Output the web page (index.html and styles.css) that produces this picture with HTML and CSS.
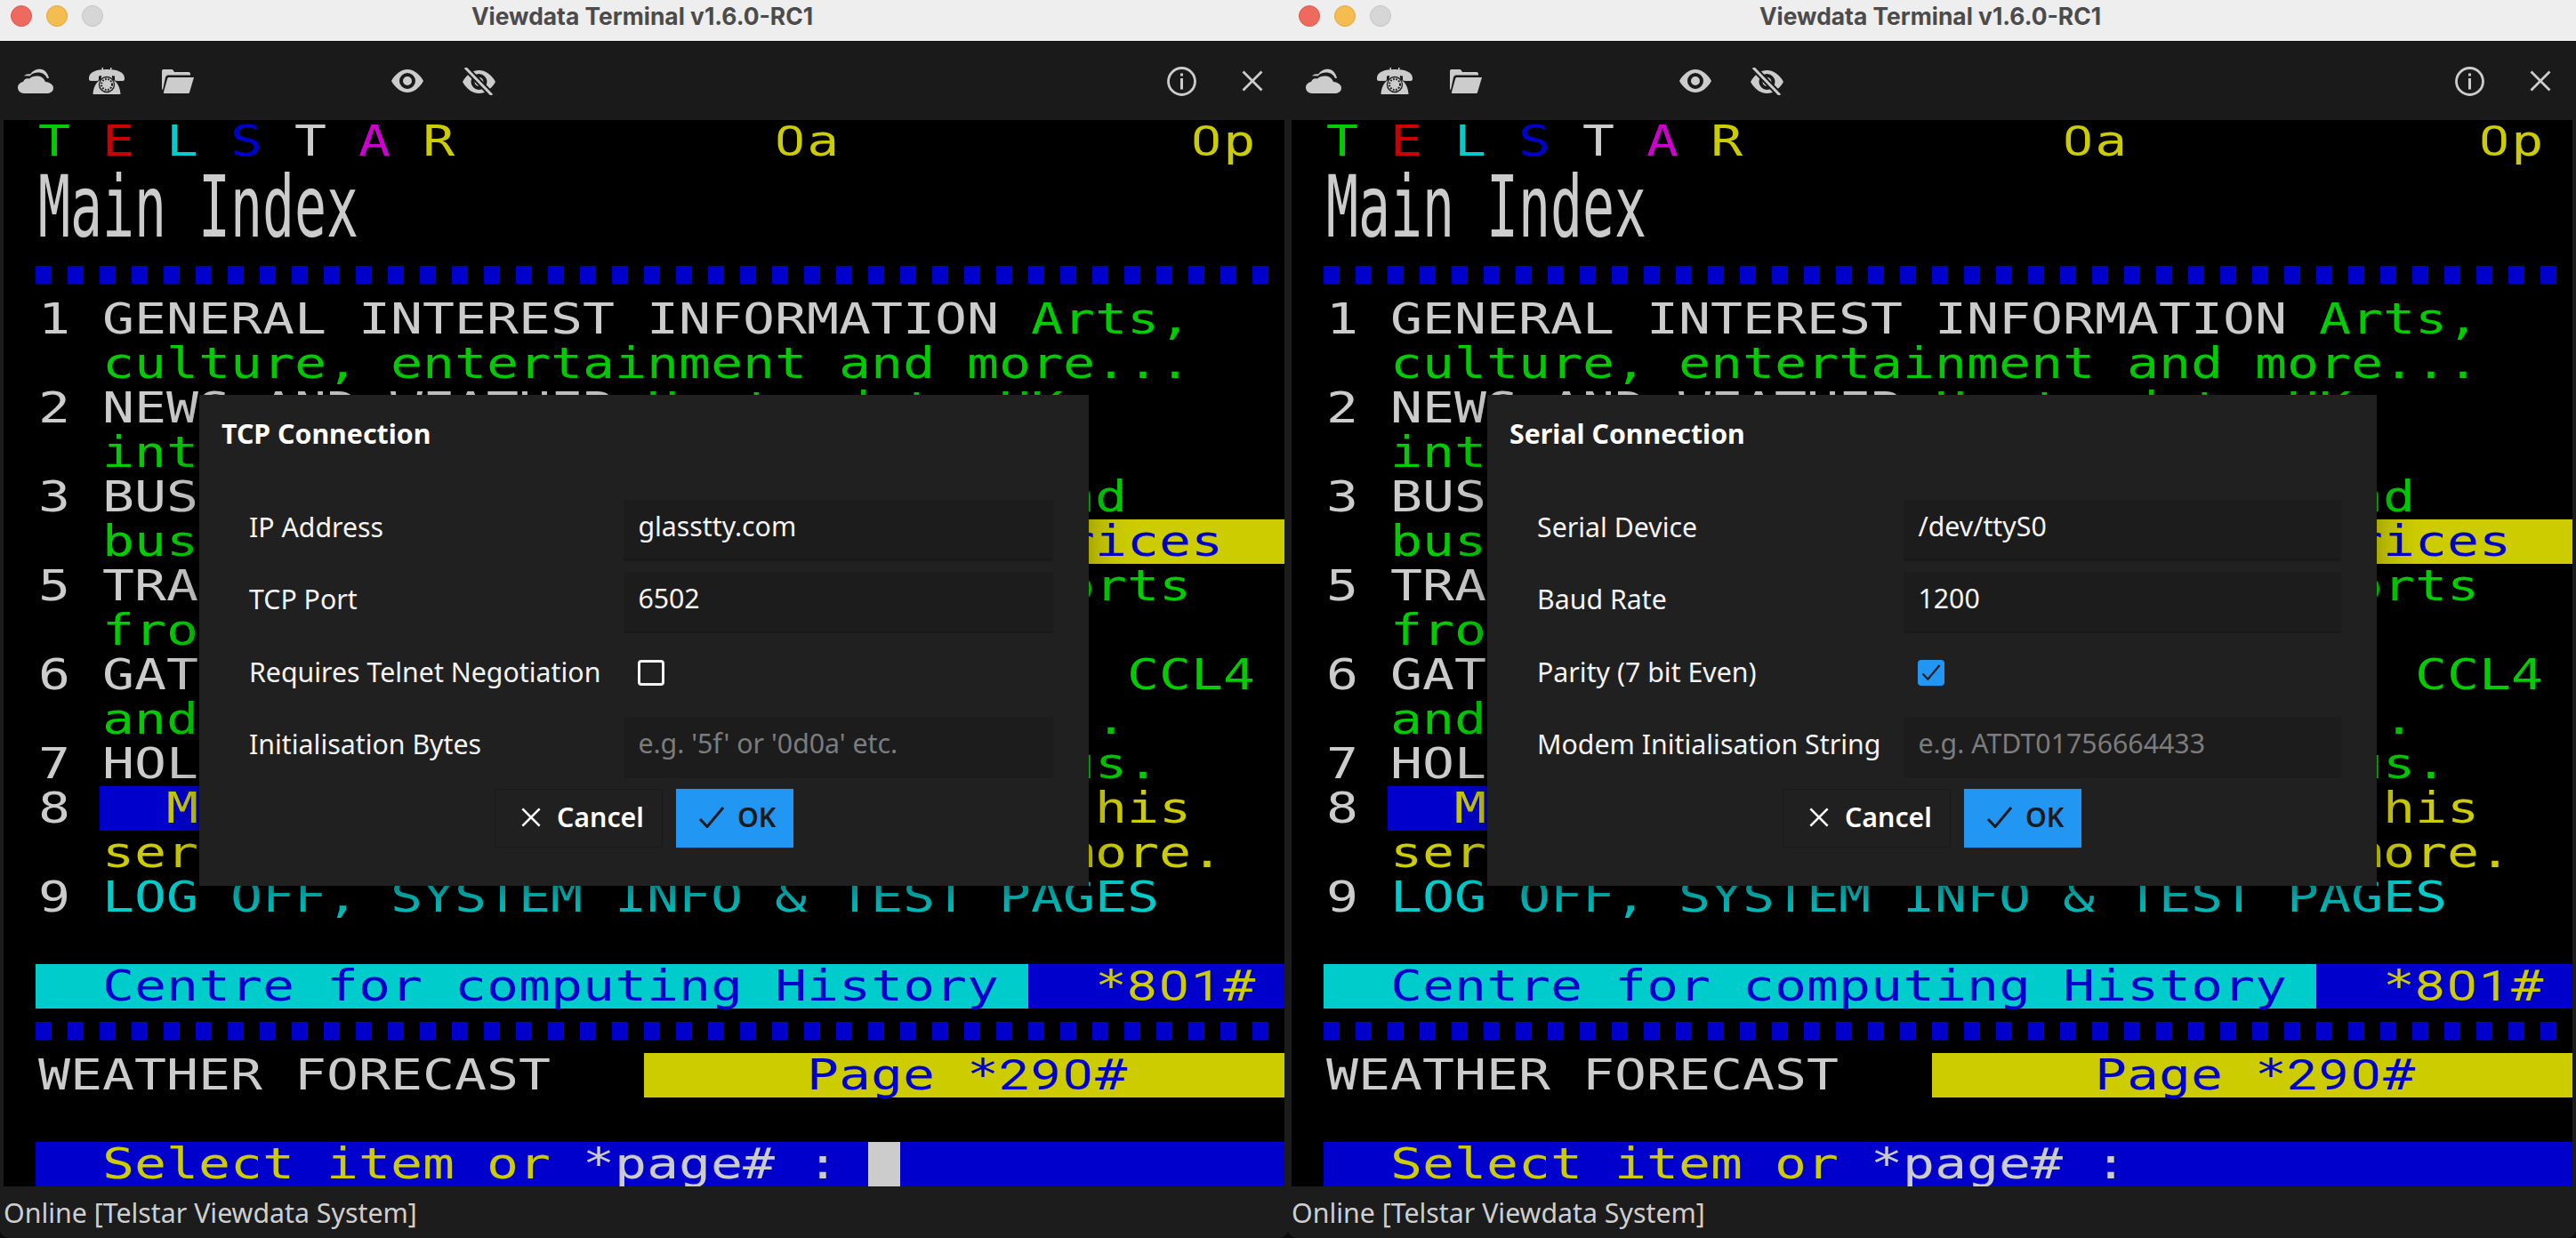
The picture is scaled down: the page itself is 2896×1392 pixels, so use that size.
FILE: index.html
```html
<!DOCTYPE html>
<html>
  <head>
    <title>Viewdata Terminal</title>
    <meta name="viewport" content="width=device-width, initial-scale=1.0" />
    <link rel="stylesheet" href="styles.css">
  </head>
  <body>
    <svg class="defs" width="0" height="0">
      <symbol id="i-cloud" viewBox="0 0 40 28">
        <path d="M7 28C3 28 0 25 0 21.5 0 18 3 15.5 6 15 7 11.5 10 10.5 13 11.5 15 9 19 8 23 8.5 27 9 30 12 31 15 36 15.5 40 18 40 22 40 25.5 37 28 33 28Z" />
        <path d="M7 8.5C9 6.5 11 6 14 6.5 17 1.5 23 0 27 1 31 2 34 6 35 11L33 11C31 6.5 27 4.5 23 4.5 19 4.5 15.5 6 13.5 8.5 11 8 9 8 7 8.5Z" />
      </symbol>
      <symbol id="i-phone" viewBox="0 0 40 30">
        <path d="M14.5 0h1.5v3h-1.500zM24 0h1.500v3h-1.500z" />
        <path d="M0 12C0 5 8 2 20 2 32 2 40 5 40 12V13C40 14 39 15 38 15H31C30 15 29 14 29 13V9.500C24 8.500 16 8.500 11 9.500V13C11 14 10 15 9 15H2C1 15 0 14 0 13Z" />
        <path d="M14.500 8h11l1 5.500C32 16 35 22 35.500 30H4.500C5 22 8 16 13.500 13.500Z" />
        <circle cx="20" cy="19" r="8.500" fill="none" stroke="#1a1a1a" stroke-width="1.300" />
        <circle cx="20" cy="19" r="6" fill="none" stroke="#1a1a1a" stroke-width="2" stroke-dasharray="1.700 1.500" />
      </symbol>
      <symbol id="i-folder" viewBox="0 0 36 28">
        <path d="M0 3C0 1.500 1 1 2 1H11C12 1 13 2 14 4H30C31.500 4 32 5 32 6.500V7.500H7C5.500 7.500 4.500 8.500 4 10L1 24C.5 24 0 23 0 22Z" />
        <path d="M8 10H36L31 27C30.500 28 30 28 29 28H3C2 28 1.800 27.500 2 26.500L6 12C6.500 10.500 7 10 8 10Z" />
      </symbol>
      <symbol id="i-eye" viewBox="0 0 36 26">
        <path d="M0 13C5 4 12 0 18 0 24 0 31 4 36 13 31 22 24 26 18 26 12 26 5 22 0 13Z" />
        <circle cx="18" cy="13" r="7" fill="none" stroke="#1a1a1a" stroke-width="4" />
      </symbol>
      <symbol id="i-eye-off" viewBox="0 0 37 31">
        <path d="M0 16C5 7 12 3 18.500 3 25 3 32 7 37 16 32 25 25 29 18.500 29 12 29 5 25 0 16Z" />
        <circle cx="18.500" cy="16" r="7" fill="none" stroke="#1a1a1a" stroke-width="4" />
        <path d="M3 0L33 31" stroke="#1a1a1a" stroke-width="7" />
        <path d="M3 0L33 31" stroke="#cccccc" stroke-width="3" />
      </symbol>
      <symbol id="i-info" viewBox="0 0 33 33">
        <circle cx="16.500" cy="16.500" r="15" fill="none" stroke="#cccccc" stroke-width="2.800" />
        <path d="M15 7.500h3v3h-3zM15 13h3v12.500h-3z" />
      </symbol>
      <symbol id="i-close" viewBox="0 0 24 24">
        <path d="M1.500 1.500L22.500 22.500M22.500 1.500L1.500 22.500" fill="none" stroke="currentColor" stroke-width="2.800" />
      </symbol>
      <symbol id="i-check" viewBox="0 0 30 24">
        <path d="M2 14L10 22.500 28 1" fill="none" stroke="currentColor" stroke-width="3" />
      </symbol>
    </svg>

    <div class="desktop">
      <!-- TCP window -->
      <div class="window">
        <div class="titlebar">
          <span class="light red"></span>
          <span class="light amber"></span>
          <span class="light off"></span>
          <span class="title">Viewdata Terminal v1.6.0-RC1</span>
        </div>
        <div class="main">
          <div class="toolbar">
            <span class="tool"><svg class="ic-cloud"><use href="#i-cloud" /></svg></span>
            <span class="tool"><svg class="ic-phone"><use href="#i-phone" /></svg></span>
            <span class="tool"><svg class="ic-folder"><use href="#i-folder" /></svg></span>
            <span class="tool eye-group"><svg class="ic-eye"><use href="#i-eye" /></svg></span>
            <span class="tool"><svg class="ic-eye-off"><use href="#i-eye-off" /></svg></span>
            <span class="tool right-group"><svg class="ic-info"><use href="#i-info" /></svg></span>
            <span class="tool"><svg class="ic-close"><use href="#i-close" /></svg></span>
          </div>
          <div class="terminal">
            <div class="row"> <span class="gr">T</span> <span class="rd">E</span> <span class="cy">L</span> <span class="bl">S</span> <span class="wh">T</span> <span class="mg">A</span> <span class="yl">R</span>          <span class="yl"><span class="dg">0</span>a</span>           <span class="yl"><span class="dg">0</span>p</span></div>
            <div class="row double"> <span class="wh">Main Index</span></div>
            <div class="sep"></div>
            <div class="row"> <span class="wh">1 GENERAL INTEREST INFORMATION</span> <span class="gr">Arts,</span></div>
            <div class="row">   <span class="gr">culture, entertainment and more...</span></div>
            <div class="row"> <span class="wh">2 NEWS AND WEATHER</span> <span class="gr">Up to date UK</span></div>
            <div class="row">   <span class="gr">int</span></div>
            <div class="row"> <span class="wh">3 BUS</span>                           <span class="gr">nd</span></div>
            <div class="row bg-services">   <span class="gr">bus</span>                           <span class="bl">rices</span></div>
            <div class="row"> <span class="wh">5 TRA</span>                           <span class="gr">orts</span></div>
            <div class="row">   <span class="gr">fro</span></div>
            <div class="row"> <span class="wh">6 GAT</span>                             <span class="gr">CCL4</span></div>
            <div class="row">   <span class="gr">and</span>                            <span class="gr">.</span></div>
            <div class="row"> <span class="wh">7 HOL</span>                           <span class="gr">us.</span></div>
            <div class="row bg-mid"> <span class="wh">8</span>   <span class="yl">M</span>                            <span class="yl">his</span></div>
            <div class="row">   <span class="yl">ser</span>                           <span class="yl">more.</span></div>
            <div class="row"> <span class="wh">9</span> <span class="cy">LOG OFF, SYSTEM INFO &amp; TEST PAGES</span></div>
            <div class="row"></div>
            <div class="row bg-centre">   <span class="bl">Centre for computing History</span>   <span class="yl">*<span class="dg">801</span>#</span></div>
            <div class="sep"></div>
            <div class="row bg-page"> <span class="wh">WEATHER FORECAST</span>        <span class="bl">Page *<span class="dg">290</span>#</span></div>
            <div class="row"></div>
            <div class="row bg-prompt cursor">   <span class="yl">Select item or </span><span class="wh">*page# :</span></div>
          </div>
          <div class="status">Online [Telstar Viewdata System]</div>

          <div class="overlay">
            <div class="dialog">
              <div class="dialog-title">TCP Connection</div>
              <div class="form">
                <div class="label">IP Address</div>
                <div class="field">glasstty.com</div>
                <div class="label">TCP Port</div>
                <div class="field">6502</div>
                <div class="label">Requires Telnet Negotiation</div>
                <div class="check-cell"><span class="check"></span></div>
                <div class="label">Initialisation Bytes</div>
                <div class="field hint">e.g. '5f' or '0d0a' etc.</div>
              </div>
              <div class="buttons">
                <div class="btn cancel"><svg class="ic-x"><use href="#i-close" /></svg>Cancel</div>
                <div class="btn ok"><svg class="ic-tick"><use href="#i-check" /></svg>OK</div>
              </div>
            </div>
          </div>
        </div>
      </div>

      <!-- Serial window -->
      <div class="window">
        <div class="titlebar">
          <span class="light red"></span>
          <span class="light amber"></span>
          <span class="light off"></span>
          <span class="title">Viewdata Terminal v1.6.0-RC1</span>
        </div>
        <div class="main">
          <div class="toolbar">
            <span class="tool"><svg class="ic-cloud"><use href="#i-cloud" /></svg></span>
            <span class="tool"><svg class="ic-phone"><use href="#i-phone" /></svg></span>
            <span class="tool"><svg class="ic-folder"><use href="#i-folder" /></svg></span>
            <span class="tool eye-group"><svg class="ic-eye"><use href="#i-eye" /></svg></span>
            <span class="tool"><svg class="ic-eye-off"><use href="#i-eye-off" /></svg></span>
            <span class="tool right-group"><svg class="ic-info"><use href="#i-info" /></svg></span>
            <span class="tool"><svg class="ic-close"><use href="#i-close" /></svg></span>
          </div>
          <div class="terminal">
            <div class="row"> <span class="gr">T</span> <span class="rd">E</span> <span class="cy">L</span> <span class="bl">S</span> <span class="wh">T</span> <span class="mg">A</span> <span class="yl">R</span>          <span class="yl"><span class="dg">0</span>a</span>           <span class="yl"><span class="dg">0</span>p</span></div>
            <div class="row double"> <span class="wh">Main Index</span></div>
            <div class="sep"></div>
            <div class="row"> <span class="wh">1 GENERAL INTEREST INFORMATION</span> <span class="gr">Arts,</span></div>
            <div class="row">   <span class="gr">culture, entertainment and more...</span></div>
            <div class="row"> <span class="wh">2 NEWS AND WEATHER</span> <span class="gr">Up to date UK</span></div>
            <div class="row">   <span class="gr">int</span></div>
            <div class="row"> <span class="wh">3 BUS</span>                           <span class="gr">nd</span></div>
            <div class="row bg-services">   <span class="gr">bus</span>                           <span class="bl">rices</span></div>
            <div class="row"> <span class="wh">5 TRA</span>                           <span class="gr">orts</span></div>
            <div class="row">   <span class="gr">fro</span></div>
            <div class="row"> <span class="wh">6 GAT</span>                             <span class="gr">CCL4</span></div>
            <div class="row">   <span class="gr">and</span>                            <span class="gr">.</span></div>
            <div class="row"> <span class="wh">7 HOL</span>                           <span class="gr">us.</span></div>
            <div class="row bg-mid"> <span class="wh">8</span>   <span class="yl">M</span>                            <span class="yl">his</span></div>
            <div class="row">   <span class="yl">ser</span>                           <span class="yl">more.</span></div>
            <div class="row"> <span class="wh">9</span> <span class="cy">LOG OFF, SYSTEM INFO &amp; TEST PAGES</span></div>
            <div class="row"></div>
            <div class="row bg-centre">   <span class="bl">Centre for computing History</span>   <span class="yl">*<span class="dg">801</span>#</span></div>
            <div class="sep"></div>
            <div class="row bg-page"> <span class="wh">WEATHER FORECAST</span>        <span class="bl">Page *<span class="dg">290</span>#</span></div>
            <div class="row"></div>
            <div class="row bg-prompt">   <span class="yl">Select item or </span><span class="wh">*page# :</span></div>
          </div>
          <div class="status">Online [Telstar Viewdata System]</div>

          <div class="overlay">
            <div class="dialog">
              <div class="dialog-title">Serial Connection</div>
              <div class="form">
                <div class="label">Serial Device</div>
                <div class="field">/dev/ttyS0</div>
                <div class="label">Baud Rate</div>
                <div class="field">1200</div>
                <div class="label">Parity (7 bit Even)</div>
                <div class="check-cell"><span class="check on"><svg class="ic-on"><use href="#i-check" /></svg></span></div>
                <div class="label">Modem Initialisation String</div>
                <div class="field hint">e.g. ATDT01756664433</div>
              </div>
              <div class="buttons">
                <div class="btn cancel"><svg class="ic-x"><use href="#i-close" /></svg>Cancel</div>
                <div class="btn ok"><svg class="ic-tick"><use href="#i-check" /></svg>OK</div>
              </div>
            </div>
          </div>
        </div>
      </div>
    </div>
  </body>
</html>
```

FILE: styles.css
```css
html,
body {
  margin: 0;
  height: 100%;
  background: #0c0c0c;
  overflow: hidden;
}
.defs {
  position: absolute;
}
.desktop {
  display: flex;
  width: 2896px;
  height: 1392px;
  font-family: "Noto Sans", sans-serif;
}
.window {
  width: 1448px;
  height: 1392px;
  display: flex;
  flex-direction: column;
  border-radius: 0 0 10px 10px;
  overflow: hidden;
  background: #1c1c1c;
}

/* mac title bar */
.titlebar {
  position: relative;
  height: 46px;
  flex: none;
  background: #eeeeee;
  border-bottom: 1px solid #111;
  display: flex;
  align-items: center;
  justify-content: center;
}
.light {
  position: absolute;
  top: 6px;
  width: 24px;
  height: 24px;
  border-radius: 50%;
  box-sizing: border-box;
}
.red {
  left: 12px;
  background: #ee6a5f;
  border: 1px solid #e0584c;
}
.amber {
  left: 52px;
  background: #f5bd4f;
  border: 1px solid #e0a63a;
}
.off {
  left: 92px;
  background: #d6d6d6;
  border: 1px solid #c4c4c4;
}
.title {
  font-family: "Inter", sans-serif;
  font-weight: 700;
  font-size: 26.4px;
  color: #4b4b4b;
  margin: -10px 4px 0 0;
}

.main {
  position: relative;
  flex: 1;
  display: flex;
  flex-direction: column;
  min-height: 0;
}

.toolbar {
  position: relative;
  z-index: 1;
  flex: none;
  height: 88px;
  background: #1a1a1a;
  display: flex;
  align-items: center;
  color: #cccccc;
}
.tool {
  width: 80px;
  height: 32px;
  display: flex;
  align-items: center;
  justify-content: center;
}
.tool svg {
  fill: #cccccc;
  color: #cccccc;
}
.eye-group {
  margin-left: 178px;
}
.right-group {
  margin-left: auto;
}
.ic-cloud {
  width: 40px;
  height: 28px;
}
.ic-phone {
  width: 40px;
  height: 30px;
}
.ic-folder {
  width: 36px;
  height: 28px;
}
.ic-eye {
  width: 36px;
  height: 26px;
}
.ic-eye-off {
  width: 37px;
  height: 31px;
}
.ic-info {
  width: 33px;
  height: 33px;
}
.ic-close {
  width: 24px;
  height: 24px;
}

/* teletext screen, 40 x 24 cells of 36 x 50 */
.terminal {
  flex: none;
  height: 1200px;
  margin: -1px 4px 0;
  background: #000;
  overflow: hidden;
  display: flex;
  flex-direction: column;
  font-family: "DejaVu Sans Mono", monospace;
  font-size: 48px;
  line-height: 49px;
}
.row {
  flex: none;
  box-sizing: border-box;
  width: 40ch;
  height: 50px;
  padding-left: 2.4px;
  white-space: pre;
  transform-origin: 0 0;
  transform: scaleX(1.2458);
}
.row span {
  display: inline-block;
}
.row .dg {
  display: inline;
}
.double {
  margin-bottom: 50px;
  transform: scale(1.2458, 2);
}
.sep {
  flex: none;
  height: 20px;
  margin: 15px 0 15px 36px;
  background: repeating-linear-gradient(90deg, #0000cc 0 18px, transparent 18px 36px);
}
.gr {
  color: #00cc00;
}
.rd {
  color: #cc0000;
}
.cy {
  color: #00cccc;
}
.bl {
  color: #0000cc;
}
.wh {
  color: #cccccc;
}
.mg {
  color: #cc00cc;
}
.yl {
  color: #cccc00;
}
.dg {
  font-family: "Roboto", sans-serif;
  letter-spacing: 1.95px;
}

/* coloured cells behind a row, stops given in columns */
.bg-services {
  background: linear-gradient(90deg, transparent 33ch, #cccc00 33ch);
}
.bg-mid {
  background: linear-gradient(90deg, transparent 3ch, #0000cc 3ch 14ch, transparent 14ch);
}
.bg-centre {
  background: linear-gradient(90deg, transparent 1ch, #00cccc 1ch 32ch, #0000cc 32ch);
}
.bg-page {
  background: linear-gradient(90deg, transparent 20ch, #cccc00 20ch);
}
.bg-prompt {
  background: linear-gradient(90deg, transparent 1ch, #0000cc 1ch);
}
.bg-prompt.cursor {
  background: linear-gradient(90deg, transparent 1ch, #0000cc 1ch 27ch, #cccccc 27ch 28ch, #0000cc 28ch);
}

.status {
  flex: 1;
  padding-left: 4px;
  line-height: 60px;
  font-size: 30.3px;
  color: #cfcfcf;
  background: #1c1c1c;
}

/* modal dialog */
.overlay {
  position: absolute;
  inset: 0;
  z-index: 2;
  display: flex;
  align-items: center;
  justify-content: center;
}
.dialog {
  width: 1000px;
  height: 552px;
  box-sizing: border-box;
  padding: 0 40px 0 56px;
  background: #202020;
  box-shadow: 0 11px 15px -7px rgba(0, 0, 0, 0.2), 0 24px 38px 3px rgba(0, 0, 0, 0.14), 0 9px 46px 8px rgba(0, 0, 0, 0.12);
}
.dialog-title {
  margin-left: -31px;
  height: 118px;
  line-height: 88px;
  font-size: 30.3px;
  font-weight: 700;
  color: #fff;
}
.form {
  display: grid;
  grid-template-columns: auto 1fr;
  grid-auto-rows: 69px;
  column-gap: 26px;
  row-gap: 12.4px;
  align-items: center;
  font-size: 30.3px;
  color: #f4f4f4;
}
.label {
  margin-top: -7px;
}
.field {
  height: 69px;
  box-sizing: border-box;
  padding-left: 16px;
  line-height: 59px;
  background: #1c1c1c;
  border-bottom: 3px solid #1a1a1a;
}
.hint {
  color: #7c7c7c;
  border-bottom: 0;
}
.check-cell {
  padding-left: 16px;
  margin-bottom: 5px;
  display: flex;
}
.check {
  width: 30px;
  height: 29px;
  box-sizing: border-box;
  border: 3px solid #f2f2f2;
  border-radius: 4px;
}
.check.on {
  border: 0;
  background: #2196f3;
  color: #1a1a1a;
  display: flex;
  align-items: center;
  justify-content: center;
}
.ic-on {
  width: 22px;
  height: 18px;
}
.buttons {
  display: flex;
  justify-content: center;
  gap: 15px;
  margin: 12px 0 0 -16px;
}
.btn {
  height: 66px;
  box-sizing: border-box;
  padding-bottom: 2px;
  display: flex;
  align-items: center;
  font-size: 30.3px;
  font-weight: 600;
}
.cancel {
  width: 189px;
  padding-left: 28px;
  color: #fff;
  border: 1px solid #1a1a1a;
}
.ok {
  width: 132px;
  padding-left: 25px;
  color: #1a1a1a;
  background: #2196f3;
}
.ic-x {
  width: 24px;
  height: 22px;
  margin-right: 17px;
}
.ic-tick {
  width: 30px;
  height: 24px;
  margin-right: 14px;
}
```
